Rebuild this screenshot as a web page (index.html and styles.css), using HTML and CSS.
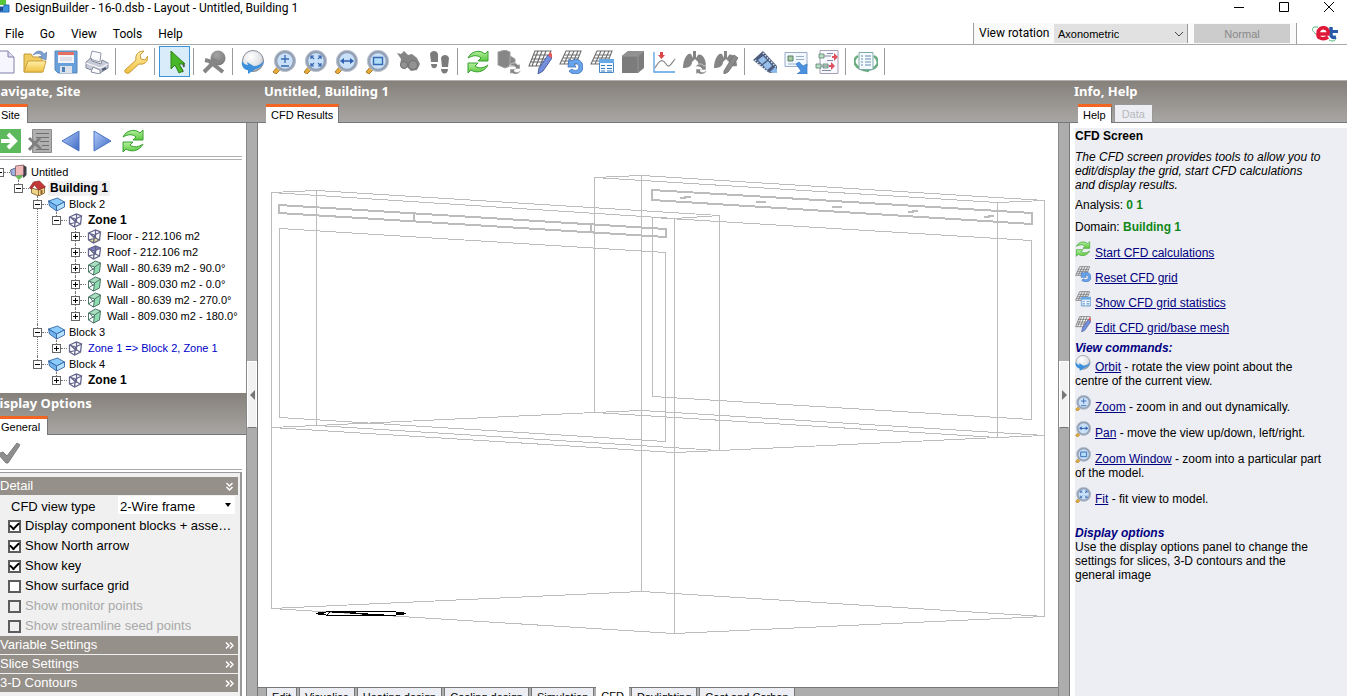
FILE: index.html
```
<!DOCTYPE html>
<html lang="en">
<head>
<meta charset="utf-8">
<title>DesignBuilder</title>
<link rel="stylesheet" href="styles.css">
</head>
<body>
<svg class="sprite" aria-hidden="true">
  <defs>
    <linearGradient id="gGreen" x1="0" y1="0" x2="0" y2="1"><stop offset="0" stop-color="#b4f0a0"/><stop offset="1" stop-color="#5cc83c"/></linearGradient>
    <linearGradient id="gBlue" x1="0" y1="0" x2="1" y2="1"><stop offset="0" stop-color="#b4ccf8"/><stop offset="1" stop-color="#3c68c4"/></linearGradient>
    <linearGradient id="gGold" x1="0" y1="0" x2="0" y2="1"><stop offset="0" stop-color="#fff0a8"/><stop offset="1" stop-color="#f0c040"/></linearGradient>
    <radialGradient id="gBall" cx=".4" cy=".3" r=".8"><stop offset="0" stop-color="#fff"/><stop offset=".6" stop-color="#e0e2e6"/><stop offset="1" stop-color="#888c94"/></radialGradient>
    <radialGradient id="gGray" cx=".4" cy=".3" r=".9"><stop offset="0" stop-color="#a4a4a4"/><stop offset="1" stop-color="#707070"/></radialGradient>
  </defs>
  <symbol id="new" viewBox="0 0 24 24"><path d="M3 1h13l6 6v16H3z" fill="#f6f6ff" stroke="#8080a8"/><path d="M16 1v6h6" fill="#dcdcf0" stroke="#8080a8"/></symbol>
  <symbol id="open" viewBox="0 0 24 24"><path d="M1 4h7l2 3h9v15H1z" fill="#f0cc60" stroke="#c09838"/><path d="M5 11h18l-3 11H1z" fill="url(#gGold)" stroke="#c8a040"/><path d="M10 5c3-5 9-5 11-1l3-2-1 8-7-3 3-1c-2-3-5-3-9-1z" fill="#7ca0d0" stroke="#5878a8" stroke-width=".6"/></symbol>
  <symbol id="save" viewBox="0 0 24 24"><path d="M1 1h22v22H4l-3-3z" fill="#68a0dc" stroke="#5c88bc"/><path d="M4 2h16v11H4z" fill="#f4f4f8"/><path d="M4 2h16v3H4z" fill="#e87060"/><path d="M6 8h12M6 10h12" stroke="#ccd"/><path d="M6 16h12v7H6z" fill="#dde2ea"/><path d="M8 17h3v5H8z" fill="#5080b8"/></symbol>
  <symbol id="print" viewBox="0 0 24 24"><path d="M5 9 7 1l9 2-1 9z" fill="#fafaff" stroke="#9098a8"/><path d="m1 12 5-4 1 3 9 3 1-4 6 3v5l-8 5L1 18z" fill="#c8ccd8" stroke="#80869a"/><path d="m1 13 14 5 8-4" fill="none" stroke="#fff"/><path d="m8 17 7 3v4l-9-2z" fill="#fff" stroke="#8890a0"/><path d="m17 20 4-2" stroke="#505870" stroke-width="2"/></symbol>
  <symbol id="wrench" viewBox="0 0 24 24"><path d="M1 20 12 10c-1-5 2-9 8-9l-4 4 1 4 4 1 3-4c0 6-4 9-9 8L5 23c-3 1-5-1-4-3z" fill="url(#gGold)" stroke="#c89838"/></symbol>
  <symbol id="cursor" viewBox="0 0 24 24"><path d="m17 17 3 5M20 12l1 5" stroke="#555" stroke-width="2"/><path d="M8 1v18l4-4 4 8 4-2-4-7h6z" fill="#48b828" stroke="#308018"/></symbol>
  <symbol id="tool" viewBox="0 0 24 24"><circle cx="16" cy="8" r="7.500" fill="url(#gGray)"/><path d="M11 13 2 22M3 10l4 1 14 11M9 9l9 4" stroke="#858585" stroke-width="4"/></symbol>
  <symbol id="orbit" viewBox="0 0 24 24"><circle cx="12" cy="11" r="10.500" fill="url(#gBall)" stroke="#888d96"/><path d="M1 11c2 3 4 4 6 4l-1-3 10 6-9 6v-4c-4 0-7-4-6-9z" fill="#3c90dc"/><path d="M15 19c4-1 7-4 8-8-3 3-6 5-10 5z" fill="#3c90dc"/></symbol>
  <symbol id="lens" viewBox="0 0 24 24"><path d="m1 22 5-6 3 3-5 5z" fill="#e8ac38" stroke="#a87828"/><circle cx="13" cy="11" r="9.200" fill="#c8e0f8" stroke="#94a0b4" stroke-width="3"/><circle cx="13" cy="11" r="10.600" fill="none" stroke="#bcc4d0"/></symbol>
  <symbol id="zoom" viewBox="0 0 24 24"><use href="#lens"/><path d="M9 9h8M13 5v8M9 16h8" stroke="#3868b0" stroke-width="1.300" fill="none"/></symbol>
  <symbol id="fit" viewBox="0 0 24 24"><use href="#lens"/><path d="M8 9V6h3M15 6h3v3M18 13v3h-3M11 16H8v-3M8 6l3 3M18 6l-3 3M18 16l-3-3M8 16l3-3" stroke="#3868b0" stroke-width="1.200" fill="none"/></symbol>
  <symbol id="pan" viewBox="0 0 24 24"><use href="#lens"/><path d="M8 11h10" stroke="#3060b0" stroke-width="1.500"/><path d="m6 11 4-3v6zM20 11l-4-3v6z" fill="#3060b0"/></symbol>
  <symbol id="zwin" viewBox="0 0 24 24"><use href="#lens"/><path d="M8.500 7.500h9v7h-9z" stroke="#3868b0" stroke-width="1.400" fill="#b0dcf8"/></symbol>
  <symbol id="binoc" viewBox="0 0 24 24"><path d="m1 3 4 1 3-3 4 4 4-1 5 4 3 6-3 6-6 1-4-4-2 2-5-4 1-6z" fill="#858585"/><circle cx="17" cy="15" r="4.500" fill="#929292" stroke="#707070"/><circle cx="8" cy="15" r="3.500" fill="#929292" stroke="#707070"/></symbol>
  <symbol id="feet" viewBox="0 0 24 24"><path d="M3 4c1-4 7-4 8 0v8H4zM4 14h6c1 5-6 6-6 0zM14 8c1-4 7-4 8 0l-1 9h-6zM14 19h7c0 6-7 6-7 0z" fill="#7c7c7c"/></symbol>
  <symbol id="refresh" viewBox="0 0 24 24"><path d="M2 8c4-8 13-8 17-4l3-3v10H12l3-3C12 5 7 5 2 8z" fill="url(#gGreen)" stroke="#38a030"/><path d="M22 15c-4 8-13 8-17 5l-3 3V13h10l-3 3c4 3 9 2 13-1z" fill="url(#gGreen)" stroke="#38a030"/></symbol>
  <symbol id="blockref" viewBox="0 0 24 24"><path d="m1 2 7-2 5 2v14l-5 2-7-3zM13 6l5 3v7h-5z" fill="#868686" stroke="#a0a0a0"/><path d="M12 16c3-4 7-4 9-1l2-1v5h-6l2-1c-1-2-4-3-7-2zM24 20c-2 5-7 5-9 3l-2 1v-5h6l-2 2c2 2 5 1 7-1z" fill="#888" stroke="#fff" stroke-width=".5"/></symbol>
  <symbol id="grid" viewBox="0 0 24 24"><path d="M7 1h15l-5 13H1zM5.500 5h15M4 8h15M2.500 11h15M11 1 5 14M15 1 9 14M19 1l-6 13" fill="none" stroke="#707070" stroke-width="1.100"/></symbol>
  <symbol id="gridpen" viewBox="0 0 24 24"><path d="M7 1h16l-6 15H1zM5 5h17M4 9h16M3 12h15M10 1 4 16M14 1 8 16M18 1l-6 15" fill="#fff" stroke="#686868" stroke-width="1.100"/><path d="m11 18 9-13 4 3-9 13-5 3z" fill="#7490dc" stroke="#4c60a0"/><path d="m20 5 2-3 3 3-2 3z" fill="#e85858"/></symbol>
  <symbol id="gridundo" viewBox="0 0 24 24"><use href="#grid"/><path d="m10 9 2 2c6-4 12 0 12 6 0 8-11 9-14 4l3-2c3 3 7 1 7-2s-3-4-5-3l2 3h-8z" fill="#68a4ec" stroke="#3c70b8" stroke-width=".8"/></symbol>
  <symbol id="gridtab" viewBox="0 0 24 24"><use href="#grid"/><path d="M9.500 9.500h14v13h-14z" fill="#f4fbff" stroke="#4888c8"/><path d="M9 9h15v4H9z" fill="#68a8e4"/><path d="M11 15.500h4m2 0h5m-11 3h4m2 0h5m-11 2.500h4m2 0h5" stroke="#3878bc"/></symbol>
  <symbol id="cube" viewBox="0 0 24 24"><path d="m1 6 6-5h16v17l-6 5H1z" fill="#7c7c7c"/><path d="m1 6 6-5h16l-6 5z" fill="#919191"/><path d="M1 6h16v17M17 6l6-5" fill="none" stroke="#959595"/></symbol>
  <symbol id="chart" viewBox="0 0 24 24"><path d="M2 2v20h21" fill="none" stroke="#58a0e0" stroke-width="1.300"/><path d="M3 18c5-9 8-9 11-4s5 0 9-5" fill="none" stroke="#888" stroke-width="1.200"/><path d="M8 2h3v3h2l-3.500 4L6 5h2z" fill="#d84848"/></symbol>
  <symbol id="lungs" viewBox="0 0 24 24"><path d="M10 1h3v7l2-3c4-2 8 4 8 11-3 1-8 0-8-4l-3-3-3 3c0 5-5 6-9 6 0-8 4-16 8-14l2 4z" fill="#858585"/></symbol>
  <symbol id="lungs1" viewBox="0 0 24 24"><use href="#lungs"/><path d="M12 17c3-4 7-4 9-1l2-1v5h-6l2-1c-1-2-4-3-7-2zM24 20c-2 5-7 5-9 3l-2 1v-5h6l-2 2c2 2 5 1 7-1z" fill="#888" stroke="#fff" stroke-width=".5"/></symbol>
  <symbol id="lungs2" viewBox="0 0 24 24"><use href="#lungs"/><path d="m10 21 10-16 4 3-10 14-4 2z" fill="#8a8a8a" stroke="#777"/></symbol>
  <symbol id="film" viewBox="0 0 24 24"><path d="M0 10 10 1l14 15v6l-8 1z" fill="#4c5c7c"/><path d="m5 10 5-4 4 4-5 4zm5 5 5-4 4 5-5 4z" fill="#98c0ec"/><path d="m17 22 5-5 2 2v4z" fill="#88b8ec"/><path d="m2 10 14 13M10 3l13 14" stroke="#d8e4f0" stroke-dasharray="1.500 1.500" stroke-width="1.500"/></symbol>
  <symbol id="card" viewBox="0 0 24 24"><path d="M1 2.500h22v14H1z" fill="#f2f8ff" stroke="#9aacc4"/><path d="M4 6h5v5H4z" fill="#a8c8a0" stroke="#578068"/><path d="M12 6.500h8M12 9.500h8M4 14h10" stroke="#9ab0c8"/><path d="m12 14 3-2 4 4 4-2v10H13l4-3z" fill="#4c90e0" stroke="#3878c0" stroke-width=".7"/></symbol>
  <symbol id="nodes" viewBox="0 0 24 24"><path d="M5 .5h18v23H5z" fill="#f8f8ff" stroke="#a8a0b4"/><path d="M4 4h5v4H4zM1 14h5v4H1zM8 14h5v4H8z" fill="#b8e0c4" stroke="#588070" stroke-width=".8"/><path d="M9 6h7M6 16h10M7 20.500h9M12 3.500h6M12 10.500h6" stroke="#8888a4"/><path d="m19 3 4 4-4 4V8h-2V6h2zM16 12l4 4-4 4v-3h-2v-2h2z" fill="#e05060"/></symbol>
  <symbol id="report" viewBox="0 0 24 24"><path d="M4 6c-7 4-4 13 11 15M20 6c7 5 4 13-7 14" fill="none" stroke="#68ac80" stroke-width="2.500"/><path d="M5 2.500h14v17H5z" fill="#f4fbff" stroke="#80a8a8"/><path d="M7 6h2m2 0h6M7 9h2m2 0h6M7 12h2m2 0h6M7 15h2m2 0h6" stroke="#6888b0"/></symbol>
  <symbol id="go" viewBox="0 0 24 24"><path d="M0 0h24v24H0z" fill="#5cba5c"/><path d="M4 12h13M11 5l7 7-7 7" stroke="#fff" stroke-width="4" fill="none"/></symbol>
  <symbol id="listx" viewBox="0 0 24 24"><path d="M4.500.5h19v23h-19z" fill="#b0b0b0" stroke="#8c8c8c"/><path d="M8 4.500h13M8 8.500h13M12 12.500h9M14 16.500h7M8 20.500h13" stroke="#707070"/><path d="m1 9 12 11M12 9 1 21" stroke="#808080" stroke-width="3"/></symbol>
  <symbol id="prev" viewBox="0 0 24 24"><path d="M20 2v20L3 12z" fill="url(#gBlue)" stroke="#4c74c4"/></symbol>
  <symbol id="next" viewBox="0 0 24 24"><path d="M4 2v20l17-10z" fill="url(#gBlue)" stroke="#4c74c4"/></symbol>
  <symbol id="tick" viewBox="0 0 24 24"><path d="m2 13 5-2 4 4L21 2l3 2-12 18h-2z" fill="#8e8e8e" stroke="#7c7c7c"/></symbol>
  <symbol id="site" viewBox="0 0 16 16"><path d="m0 6 5-2v8l-4-1z" fill="#a0b0e0" stroke="#606888"/><path d="m8 2 5-1 3 2v8l-3 3z" fill="#404048"/><path d="m5 2 8-1v10l-8 1z" fill="#f0b8b8" stroke="#806068" stroke-width=".8"/><path d="m5 12 6-1 1 2-4 3z" fill="#68bc58"/></symbol>
  <symbol id="house" viewBox="0 0 16 16"><path d="m2 8 7 2v6l-7-3zM9 10l6-3v6l-6 3z" fill="#f0d488" stroke="#90703c"/><path d="m0 8 4-6 6-1 6 6-7 3-4-5-3 4z" fill="#c43838" stroke="#802828" stroke-width=".7"/><path d="M11 10h2v4h-2z" fill="#906030"/></symbol>
  <symbol id="block" viewBox="0 0 16 16"><path d="m0 5 9-3 7 4-8 4z" fill="#8cccfc" stroke="#285898" stroke-width=".8"/><path d="m0 5 8 5v5L1 10z" fill="#70b4f0" stroke="#285898" stroke-width=".8"/><path d="m8 10 8-4v5l-8 4z" fill="#b4e0ff" stroke="#285898" stroke-width=".8"/></symbol>
  <symbol id="zone" viewBox="0 0 16 16"><path d="m2 5 7-3 5 2-1 8-6 3-5-3zM2 5l6 2 6-3M8 7l-1 8M9 2v8l-7 2M9 10l4 2M3 5l5 5" fill="none" stroke="#64648c" stroke-width="1.300"/></symbol>
  <symbol id="floor" viewBox="0 0 16 16"><path d="m2 12 7-3 5 3-7 3z" fill="#e4dc94"/><use href="#zone"/></symbol>
  <symbol id="roof" viewBox="0 0 16 16"><path d="m2 5 7-3 5 2-6 3z" fill="#8080c0"/><use href="#zone"/></symbol>
  <symbol id="wall" viewBox="0 0 16 16"><path d="m8 7 6-4-1 9-6 3z" fill="#8cdcb0"/><path d="m2 5 7-4 5 2-6 4z" fill="#a8e0c0"/><path d="m2 5 7-4 5 2-1 9-6 3-5-3zM2 5l6 2 6-4M8 7l-1 8M2 12l6-4M3 5l4 5" fill="none" stroke="#4c7468"/></symbol>
</svg>

<div class="app">
  <header class="titlebar">
    <svg class="appicon" viewBox="0 0 10 14"><path d="M0 0h6v5H0z" fill="#58c838"/><path d="M4 5h5v7H0V7h4z" fill="#3c94dc" stroke="#2468b8"/><path d="M0 7h3v4H0z" fill="#244c90"/></svg>
    <span class="title">DesignBuilder - 16-0.dsb - Layout - Untitled, Building 1</span>
    <div class="winbtns">
      <button aria-label="Minimize"><svg viewBox="0 0 12 12"><path d="M1 6.500h10" stroke="#000"/></svg></button>
      <button aria-label="Maximize"><svg viewBox="0 0 12 12"><path d="M1.500 1.500h9v9h-9z" fill="none" stroke="#000"/></svg></button>
      <button aria-label="Close"><svg viewBox="0 0 12 12"><path d="m1 1 10 10M11 1 1 11" stroke="#000"/></svg></button>
    </div>
  </header>
  <div class="menurow">
    <nav class="menu"><button>File</button><button>Go</button><button>View</button><button>Tools</button><button>Help</button></nav>
    <div class="rotation">
      <label for="rot">View rotation</label>
      <select id="rot"><option>Axonometric</option></select>
      <svg class="chev" viewBox="0 0 10 6"><path d="m1 1 4 4 4-4" fill="none" stroke="#444"/></svg>
      <button class="normal" disabled>Normal</button>
    </div>
    <div class="brand"><svg viewBox="0 0 28 18"><path d="M7 3H3C0 5 2 8 5 10M18 16c4 2 8 1 6-3" fill="none" stroke="#50b878"/><path d="M20 3v8c0 2 2 3 5 2" fill="none" stroke="#2858a8" stroke-width="3.500"/><path d="M16 7.500h11" stroke="#2858a8" stroke-width="3"/><path d="M8 10h9c2-7-9-9-10-1-1 6 6 7 10 4" fill="none" stroke="#e01838" stroke-width="3.600"/></svg></div>
  </div>
  <div class="toolbar">
    <button aria-label="New"><svg><use href="#new"/></svg></button>
    <button aria-label="Open"><svg><use href="#open"/></svg></button>
    <button aria-label="Save"><svg><use href="#save"/></svg></button>
    <button aria-label="Print"><svg><use href="#print"/></svg></button>
    <i class="sep"></i>
    <button aria-label="Options"><svg><use href="#wrench"/></svg></button>
    <i class="sep"></i>
    <button class="on" aria-label="Select"><svg><use href="#cursor"/></svg></button>
    <i class="sep"></i>
    <button aria-label="Construction"><svg><use href="#tool"/></svg></button>
    <i class="sep"></i>
    <button aria-label="Orbit"><svg><use href="#orbit"/></svg></button>
    <button aria-label="Zoom"><svg><use href="#zoom"/></svg></button>
    <button aria-label="Fit"><svg><use href="#fit"/></svg></button>
    <button aria-label="Pan"><svg><use href="#pan"/></svg></button>
    <button aria-label="Zoom window"><svg><use href="#zwin"/></svg></button>
    <button aria-label="Find"><svg><use href="#binoc"/></svg></button>
    <button aria-label="Walk"><svg><use href="#feet"/></svg></button>
    <i class="sep"></i>
    <button aria-label="Calculate"><svg><use href="#refresh"/></svg></button>
    <button aria-label="Update blocks"><svg><use href="#blockref"/></svg></button>
    <button aria-label="Edit grid"><svg><use href="#gridpen"/></svg></button>
    <button aria-label="Reset grid"><svg><use href="#gridundo"/></svg></button>
    <button aria-label="Grid statistics"><svg><use href="#gridtab"/></svg></button>
    <button aria-label="Solid"><svg><use href="#cube"/></svg></button>
    <button aria-label="Chart"><svg><use href="#chart"/></svg></button>
    <button aria-label="Age of air"><svg><use href="#lungs1"/></svg></button>
    <button aria-label="Edit comfort"><svg><use href="#lungs2"/></svg></button>
    <i class="sep"></i>
    <button aria-label="Animation"><svg><use href="#film"/></svg></button>
    <button aria-label="Export"><svg><use href="#card"/></svg></button>
    <button aria-label="Mapping"><svg><use href="#nodes"/></svg></button>
    <i class="sep"></i>
    <button aria-label="Report"><svg><use href="#report"/></svg></button>
    <i class="sep"></i>
  </div>

  <main class="work">
    <aside class="left">
      <section class="navigate">
        <div class="head cut"><h2>Navigate, Site</h2><div class="tabs"><button class="tab active">Site</button></div></div>
        <div class="minibar">
          <button aria-label="Go"><svg><use href="#go"/></svg></button>
          <button aria-label="Delete"><svg><use href="#listx"/></svg></button>
          <button aria-label="Previous"><svg><use href="#prev"/></svg></button>
          <button aria-label="Next"><svg><use href="#next"/></svg></button>
          <button aria-label="Refresh"><svg><use href="#refresh"/></svg></button>
        </div>
        <ul class="tree">
          <li><div class="node"><button class="exp open" aria-label="Collapse"></button><svg><use href="#site"/></svg><span>Untitled</span></div>
          <ul>
            <li><div class="node"><button class="exp open" aria-label="Collapse"></button><svg><use href="#house"/></svg><span class="bold sel">Building 1</span></div>
            <ul>
              <li><div class="node"><button class="exp open" aria-label="Collapse"></button><svg><use href="#block"/></svg><span>Block 2</span></div>
              <ul>
                <li><div class="node"><button class="exp open" aria-label="Collapse"></button><svg><use href="#zone"/></svg><span class="bold">Zone 1</span></div>
                <ul>
                  <li><div class="node"><button class="exp" aria-label="Expand"></button><svg><use href="#floor"/></svg><span>Floor - 212.106 m2</span></div></li>
                  <li><div class="node"><button class="exp" aria-label="Expand"></button><svg><use href="#roof"/></svg><span>Roof - 212.106 m2</span></div></li>
                  <li><div class="node"><button class="exp" aria-label="Expand"></button><svg><use href="#wall"/></svg><span>Wall - 80.639 m2 - 90.0°</span></div></li>
                  <li><div class="node"><button class="exp" aria-label="Expand"></button><svg><use href="#wall"/></svg><span>Wall - 809.030 m2 - 0.0°</span></div></li>
                  <li><div class="node"><button class="exp" aria-label="Expand"></button><svg><use href="#wall"/></svg><span>Wall - 80.639 m2 - 270.0°</span></div></li>
                  <li><div class="node"><button class="exp" aria-label="Expand"></button><svg><use href="#wall"/></svg><span>Wall - 809.030 m2 - 180.0°</span></div></li>
                </ul></li>
              </ul></li>
              <li><div class="node"><button class="exp open" aria-label="Collapse"></button><svg><use href="#block"/></svg><span>Block 3</span></div>
              <ul>
                <li><div class="node"><button class="exp" aria-label="Expand"></button><svg><use href="#zone"/></svg><span class="merged">Zone 1 =&gt; Block 2, Zone 1</span></div></li>
              </ul></li>
              <li><div class="node"><button class="exp open" aria-label="Collapse"></button><svg><use href="#block"/></svg><span>Block 4</span></div>
              <ul>
                <li><div class="node"><button class="exp" aria-label="Expand"></button><svg><use href="#zone"/></svg><span class="bold">Zone 1</span></div></li>
              </ul></li>
            </ul></li>
          </ul></li>
        </ul>
      </section>
      <section class="options">
        <div class="head cut"><h2>Display Options</h2><div class="tabs"><button class="tab active">General</button></div></div>
        <div class="minibar single"><button aria-label="Apply"><svg><use href="#tick"/></svg></button></div>
        <div class="props">
          <button class="bar">Detail<svg viewBox="0 0 8 9"><path d="m1 1 3 3 3-3M1 5l3 3 3-3" fill="none" stroke="#fff" stroke-width="1.500"/></svg></button>
          <div class="field"><label for="vt">CFD view type</label><select id="vt"><option>2-Wire frame</option></select><i class="arrow"></i></div>
          <label class="check"><input type="checkbox" checked><span>Display component blocks + assemblies</span></label>
          <label class="check"><input type="checkbox" checked><span>Show North arrow</span></label>
          <label class="check"><input type="checkbox" checked><span>Show key</span></label>
          <label class="check"><input type="checkbox"><span>Show surface grid</span></label>
          <label class="check off"><input type="checkbox" disabled><span>Show monitor points</span></label>
          <label class="check off"><input type="checkbox" disabled><span>Show streamline seed points</span></label>
          <button class="bar">Variable Settings<svg viewBox="0 0 9 8"><path d="m1 1 3 3-3 3M5 1l3 3-3 3" fill="none" stroke="#fff" stroke-width="1.500"/></svg></button>
          <button class="bar">Slice Settings<svg viewBox="0 0 9 8"><path d="m1 1 3 3-3 3M5 1l3 3-3 3" fill="none" stroke="#fff" stroke-width="1.500"/></svg></button>
          <button class="bar">3-D Contours<svg viewBox="0 0 9 8"><path d="m1 1 3 3-3 3M5 1l3 3-3 3" fill="none" stroke="#fff" stroke-width="1.500"/></svg></button>
        </div>
      </section>
    </aside>
    <div class="split"><div class="head"></div><div class="rail"><button class="grip" aria-label="Hide navigator"><svg viewBox="0 0 5 10"><path d="M5 0v10L0 5z" fill="#777"/></svg></button></div></div>
    <section class="center">
      <div class="head"><h2>Untitled, Building 1</h2><div class="tabs"><button class="tab active">CFD Results</button></div></div>
      <div class="canvas">
        <svg viewBox="258 123 800 564" fill="none" stroke="#bcbcbc" shape-rendering="crispEdges">
          <path d="M271.500 192.500 316.500 190.500 719.500 215.500 674.500 218.500zM271.500 427.500 316.500 425.500 719.500 450.500 674.500 452.500zM316.500 190.500v235M719.500 215.500v235"/>
          <path d="M594.500 177.500 641.500 175.500 1044.500 200.500 997.500 202.500zM594.500 412.500 641.500 410.500 1044.500 435.500 997.500 437.500zM594.500 177.500v235M997.500 202.500v235"/>
          <path d="M271.500 608.500 641.500 591.500 1044.500 616.500 674.500 633.500zM271.500 192.500v416M641.500 175.500v416M1044.500 200.500v416M674.500 218.500v415M316.500 425.500 594.500 412.500M719.500 450.500 997.500 437.500"/>
          <path d="M279.500 228.500 665.500 252.500v189l-386-24zM652.500 217.500 1031.500 240.500v179l-379-23z"/>
          <path stroke-width="2" d="M279 205 666 229v8L279 213zM414 213v8M591 224v9M652 190l380 23v11L652 200z"/>
          <path stroke-width="2" d="M680 198h5v-1h6M756 202h10M832 207h10M908 212h5v-1h5M984 217h5v-1h5"/>
          <path stroke="#000" d="M326 611.500h70M326 615.500h70M316 613.500h8M396 613.500h10M318 612.500h8M318 614.500h8M396 612.500h8M396 614.500h8M327 614.500l3-2M332 612.500h24M350 613.500h18M362 614.500h22"/>
        </svg>
      </div>
      <div class="viewtabs"><button>Edit</button><button>Visualise</button><button>Heating design</button><button>Cooling design</button><button>Simulation</button><button class="active">CFD</button><button>Daylighting</button><button>Cost and Carbon</button></div>
    </section>
    <div class="split"><div class="head"></div><div class="rail"><button class="grip" aria-label="Hide info"><svg viewBox="0 0 5 10"><path d="M0 0v10l5-5z" fill="#777"/></svg></button></div></div>
    <aside class="right">
      <div class="head"><h2>Info, Help</h2><div class="tabs"><button class="tab active">Help</button><button class="tab dim" disabled>Data</button></div></div>
      <div class="help">
        <div class="page">
          <h3>CFD Screen</h3>
          <p class="intro">The CFD screen provides tools to allow you to edit/display the grid, start CFD calculations and display results.</p>
          <p class="fact">Analysis: <b>0 1</b></p>
          <p class="fact">Domain: <b>Building 1</b></p>
          <p class="cmd"><svg><use href="#refresh"/></svg><a href="#">Start CFD calculations</a></p>
          <p class="cmd"><svg><use href="#gridundo"/></svg><a href="#">Reset CFD grid</a></p>
          <p class="cmd"><svg><use href="#gridtab"/></svg><a href="#">Show CFD grid statistics</a></p>
          <p class="cmd"><svg><use href="#gridpen"/></svg><a href="#">Edit CFD grid/base mesh</a></p>
          <h4>View commands:</h4>
          <p class="cmd view"><svg><use href="#orbit"/></svg><a href="#">Orbit</a> - rotate the view point about the centre of the current view.</p>
          <p class="cmd view"><svg><use href="#zoom"/></svg><a href="#">Zoom</a> - zoom in and out dynamically.</p>
          <p class="cmd view"><svg><use href="#pan"/></svg><a href="#">Pan</a> - move the view up/down, left/right.</p>
          <p class="cmd view"><svg><use href="#zwin"/></svg><a href="#">Zoom Window</a> - zoom into a particular part of the model.</p>
          <p class="cmd view"><svg><use href="#fit"/></svg><a href="#">Fit</a> - fit view to model.</p>
          <h4 class="gap">Display options</h4>
          <p>Use the display options panel to change the settings for slices, 3-D contours and the general image</p>
        </div>
      </div>
    </aside>
  </main>
</div>
</body>
</html>
```
FILE: styles.css
```
* { box-sizing: border-box; }
body { margin: 0; background: #fff; color: #000; font: 12px/16px "Liberation Sans", Arial, sans-serif; }
button, select, input { font: inherit; color: inherit; margin: 0; padding: 0; border: 0; border-radius: 0; background: none; }
h2, h3, h4, p, ul { margin: 0; padding: 0; }
ul { list-style: none; }
.sprite { position: absolute; width: 0; height: 0; }
.app { display: flex; flex-direction: column; height: 100vh; overflow: hidden; }

.titlebar { display: flex; align-items: flex-start; height: 23px; font: 12px/16px Roboto, "Open Sans", sans-serif; }
.appicon { width: 10px; height: 14px; margin-right: 5px; }
.winbtns { display: flex; gap: 33px; margin-left: auto; padding: 1px 12px 0 0; }
.winbtns button { width: 12px; height: 12px; }
.winbtns svg { display: block; width: 12px; height: 12px; }

.menurow { display: flex; height: 22px; border-bottom: 1px solid #a8a8a8; font: 12px/20px Roboto, "Open Sans", sans-serif; }
.menu { display: flex; gap: 16px; flex: 1; padding-left: 5px; }
.rotation { position: relative; display: flex; width: 324px; border-left: 1px solid #a0a0a0; border-right: 1px solid #a0a0a0; padding: 1px 6px 1px 5px; background: #fafafa; }
.rotation label { width: 75px; line-height: 18px; }
.rotation select { width: 134px; padding-left: 4px; appearance: none; background: #e1e1e1; border-right: 1px solid #999; font: 11px "Liberation Sans", Arial, sans-serif; }
.chev { position: absolute; left: 200px; top: 8px; width: 10px; height: 6px; }
.normal { flex: 1; margin-left: 6px; background: #ccc; color: #888; font: 11px "Liberation Sans", Arial, sans-serif; }
.brand { width: 50px; padding: 1px 0 0 14px; }
.brand svg { display: block; width: 28px; height: 18px; }

.toolbar { display: flex; height: 36px; padding: 1px 0 4px; margin-left: -12px; border-bottom: 1px solid #b0b0b0; box-shadow: 0 3px #e8e8e8; }
.toolbar button { display: grid; place-items: center; width: 31px; height: 31px; }
.toolbar svg { width: 24px; height: 24px; }
.toolbar .on { background: #d8ecfa; border: 1px solid #3c94d8; }
.sep { width: 8px; display: flex; }
.sep::before { content: ""; width: 1px; margin-left: 3px; height: 27px; margin-top: 2px; background: #999; }

.work { flex: 1; min-height: 0; display: grid; grid-template-columns: 246px 12px 1fr 12px 277px; grid-template-rows: minmax(0, 1fr); overflow: hidden; }
.head { height: 42px; background: linear-gradient(#85807a, #a8a6a4); border-bottom: 1px solid #777; display: flex; flex-direction: column; justify-content: space-between; }
.head h2 { color: #fff; font: bold 13px/20px "Noto Sans", "DejaVu Sans", sans-serif; white-space: nowrap; padding-left: 6px; }
.tabs { display: flex; gap: 2px; padding-left: 8px; margin-bottom: -1px; }
.tab { height: 19px; padding: 0 5px; background: #fff; border-right: 1px solid #777; font-size: 11px; line-height: 16px; }
.tab.active { border-top: 3px solid #f26522; }
.tab.dim { height: 19px; padding: 0 7px; background: #eceef4; color: #b8b8bc; border: 1px solid #999; border-bottom-color: #777; }
.left .tabs { padding-left: 0; }
.left .tab { padding: 0 7px 0 1px; }
.cut h2 { padding: 0; margin-left: -10px; }

.left { display: flex; flex-direction: column; min-height: 0; overflow: hidden; }
.navigate { display: flex; flex-direction: column; flex: 0 0 312px; }
.minibar { display: flex; gap: 7px; height: 37px; margin-right: 4px; padding: 6px 0 0; margin-left: -3px; border-bottom: 4px double #b0b0b0; }
.minibar button { height: 24px; }
.minibar svg { display: block; width: 24px; height: 24px; }
.tree { padding-top: 4px; margin-left: -5px; font-size: 11px; line-height: 15px; white-space: nowrap; }
.tree ul { margin-left: 19px; }
.tree li { position: relative; }
.tree ul > li::before { content: ""; position: absolute; left: 4px; top: 0; bottom: 0; border-left: 1px dotted #777; }
.tree ul > li:last-child::before { bottom: auto; height: 8px; }
.tree .node { position: relative; display: flex; align-items: center; height: 16px; }
.node svg { flex: none; width: 17px; height: 16px; margin-left: 6px; margin-right: 2px; }
.node::before { content: ""; position: absolute; left: 9px; width: 6px; top: 8px; border-top: 1px dotted #777; }
.exp { position: relative; width: 9px; height: 9px; border: 1px solid #666; background: #fff; flex: none; }
.exp::before { content: ""; position: absolute; left: 1px; right: 1px; top: 3px; height: 1px; background: #000; }
.exp:not(.open)::after { content: ""; position: absolute; top: 1px; bottom: 1px; left: 3px; width: 1px; background: #000; }
.node span { padding: 0 2px; }
.node .bold { font-weight: bold; font-size: 12px; }
.sel { background: #f0f0f0; }
.merged { color: #0000c8; }

.single { height: 35px; margin-left: -4px; border-bottom: 1px solid #aaa; flex: none; }
.options { flex: 1; display: flex; flex-direction: column; min-height: 0; }
.options .head { flex: none; }
.props { flex: 1; margin: 2px 4px 0 0; padding: 4px 2px 0 0; background: #f0f0f0; border-top: 1px solid #999; border-right: 2px solid #999; font-size: 13px; display: flex; flex-direction: column; min-height: 0; overflow: hidden; }
.bar { display: flex; align-items: center; justify-content: space-between; flex: none; height: 18px; margin-bottom: 1px; padding: 0 4px 0 0; background: #96908a; color: #fff; text-align: left; }
.bar svg { width: 9px; height: 9px; }
.field { position: relative; display: flex; height: 20px; padding: 0 3px 2px 11px; line-height: 22px; flex: none; }
.field label { width: 107px; }
.field select { flex: 1; min-width: 0; appearance: none; background: #fff; padding-left: 2px; }
.arrow { position: absolute; right: 7px; top: 7px; border: 3px solid transparent; border-top: 4px solid #000; border-bottom: 0; }
.check { display: flex; align-items: center; gap: 4px; height: 20px; padding-left: 8px; flex: none; }
.check span { overflow: hidden; text-overflow: ellipsis; white-space: nowrap; }
.check input { appearance: none; flex: none; width: 13px; height: 13px; border: 2px solid #5c5c5c; background: #fff; display: grid; place-items: center; }
.check input:checked::before { content: ""; width: 7px; height: 4px; border: solid #000; border-width: 0 0 2px 2px; transform: translateY(-1px) rotate(-45deg); }
.check.off { color: #a8a8a8; }
.check.off input { background: #f0f0f0; }

.split { display: flex; flex-direction: column; }
.rail { flex: 1; background: #adadad; border-left: 1px solid #888; border-right: 1px solid #777; padding-top: 238px; }
.grip { display: grid; place-items: center; width: 100%; height: 67px; background: #f2f2f2; border: 1px solid #fff; border-bottom-color: #777; }
.grip svg { width: 5px; height: 10px; }
.center { display: flex; flex-direction: column; min-width: 0; min-height: 0; }
.canvas { flex: 1; min-height: 0; }
.canvas svg { display: block; width: 100%; height: 100%; }
.viewtabs { display: flex; gap: 2px; flex: none; height: 18px; margin-bottom: -9px; padding-left: 8px; background: #adadad; border-top: 1px solid #777; font-size: 11px; line-height: 18px; }
.viewtabs button { padding: 0 5px; background: #eceef4; border-left: 1px solid #777; border-right: 1px solid #777; white-space: nowrap; }
.viewtabs .active { background: #fff; border: 0; margin-top: -1px; }

.right { display: flex; flex-direction: column; min-width: 0; min-height: 0; }
.right .head h2 { padding-left: 4px; }
.help { flex: 1; min-height: 0; padding: 5px 0 0 4px; border-left: 1px solid #fff; }
.page { height: 100%; background: #edeef3; padding: 1px 22px 0 0; line-height: 14px; overflow: hidden; }
.page h3 { font-size: 12px; line-height: 14px; margin-bottom: 7px; }
.intro { font-style: italic; margin-bottom: 6px; }
.fact { margin-bottom: 8px; }
.fact b { color: #108818; }
.fact + .cmd { margin-top: -1px; }
.cmd { margin-bottom: 6px; }
.cmd.view { margin-bottom: 7px; }
.cmd svg { width: 16px; height: 16px; margin-right: 4px; vertical-align: baseline; }
.cmd a { color: #000080; }
.page h4 { font-size: 12px; font-style: italic; color: #000080; }
.page h4.gap { margin-top: 20px; }
```
